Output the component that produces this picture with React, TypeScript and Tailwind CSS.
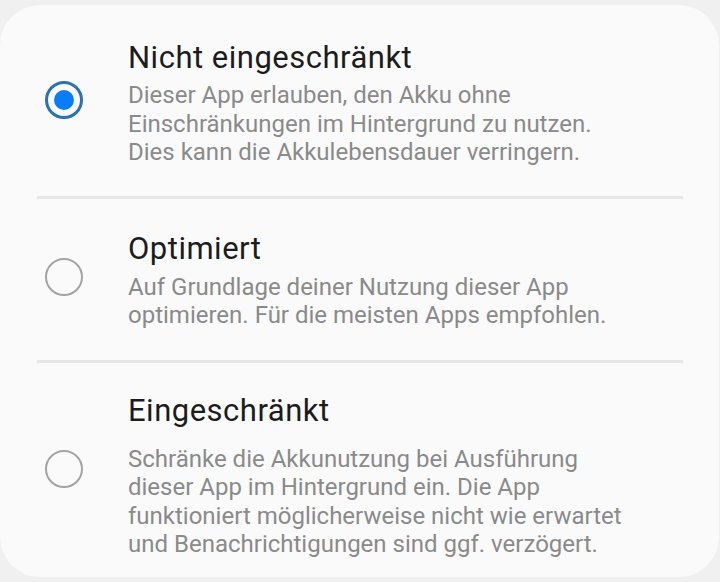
import React from "react";

type Option = {
  title: string;
  lines: string[];
  selected: boolean;
};

const options: Option[] = [
  {
    title: "Nicht eingeschränkt",
    lines: [
      "Dieser App erlauben, den Akku ohne",
      "Einschränkungen im Hintergrund zu nutzen.",
      "Dies kann die Akkulebensdauer verringern.",
    ],
    selected: true,
  },
  {
    title: "Optimiert",
    lines: [
      "Auf Grundlage deiner Nutzung dieser App",
      "optimieren. Für die meisten Apps empfohlen.",
    ],
    selected: false,
  },
  {
    title: "Eingeschränkt",
    lines: [
      "Schränke die Akkunutzung bei Ausführung",
      "dieser App im Hintergrund ein. Die App",
      "funktioniert möglicherweise nicht wie erwartet",
      "und Benachrichtigungen sind ggf. verzögert.",
    ],
    selected: false,
  },
];

const Radio = ({ on }: { on: boolean }) =>
  on ? (
    <div className="w-[38px] h-[38px] shrink-0 rounded-full border-[3px] border-[#2d71b4] flex items-center justify-center">
      <div className="w-5 h-5 rounded-full bg-[#0a7cf6]" />
    </div>
  ) : (
    <div className="w-[38px] h-[38px] shrink-0 rounded-full border-2 border-[#a3a3a3]" />
  );

const App: React.FC = () => {
  return (
    <main
      className="w-[720px] h-[582px] bg-[#f0f0f0] pt-[5px] overflow-hidden"
      style={{ fontFamily: "Roboto, 'Noto Sans', sans-serif" }}
    >
      <div className="h-[572px] mr-px rounded-[40px] bg-[#fafafa]">
        {/* Nicht eingeschränkt */}
        <div className="flex items-center pl-[45px] pt-[35px] pb-[29px]">
          <div className="mb-[6px]">
            <Radio on={options[0].selected} />
          </div>
          <div className="ml-[45px]">
            <h2 className="text-[31px] leading-[36px] tracking-[0.5px] text-[#1c1c1c]">{options[0].title}</h2>
            <p className="mt-[5px] text-[24px] leading-[28.5px] text-[#8a8a8a] whitespace-nowrap">
              {options[0].lines.map((l, i) => (
                <span key={i} className="block">{l}</span>
              ))}
            </p>
          </div>
        </div>
        <div className="ml-[37px] mr-[36px] h-[3px] bg-[#e6e6e6]" />

        {/* Optimiert */}
        <div className="flex items-center pl-[45px] pt-[32px] pb-[30px]">
          <div className="mb-[7px]">
            <Radio on={options[1].selected} />
          </div>
          <div className="ml-[45px]">
            <h2 className="text-[31px] leading-[36px] tracking-[0.5px] text-[#1c1c1c]">{options[1].title}</h2>
            <p className="mt-[6px] text-[24px] leading-[28.5px] text-[#8a8a8a] whitespace-nowrap">
              {options[1].lines.map((l, i) => (
                <span key={i} className="block">{l}</span>
              ))}
            </p>
          </div>
        </div>
        <div className="ml-[37px] mr-[36px] h-[3px] bg-[#e6e6e6]" />

        {/* Eingeschränkt */}
        <div className="flex items-center pl-[45px] pt-[30px]">
          <div className="mb-[14px]">
            <Radio on={options[2].selected} />
          </div>
          <div className="ml-[45px]">
            <h2 className="text-[31px] leading-[36px] tracking-[0.5px] text-[#1c1c1c]">{options[2].title}</h2>
            <p className="mt-[16px] text-[24px] leading-[28.5px] text-[#8a8a8a] whitespace-nowrap">
              {options[2].lines.map((l, i) => (
                <span key={i} className="block">{l}</span>
              ))}
            </p>
          </div>
        </div>
      </div>
    </main>
  );
};

export default App;
